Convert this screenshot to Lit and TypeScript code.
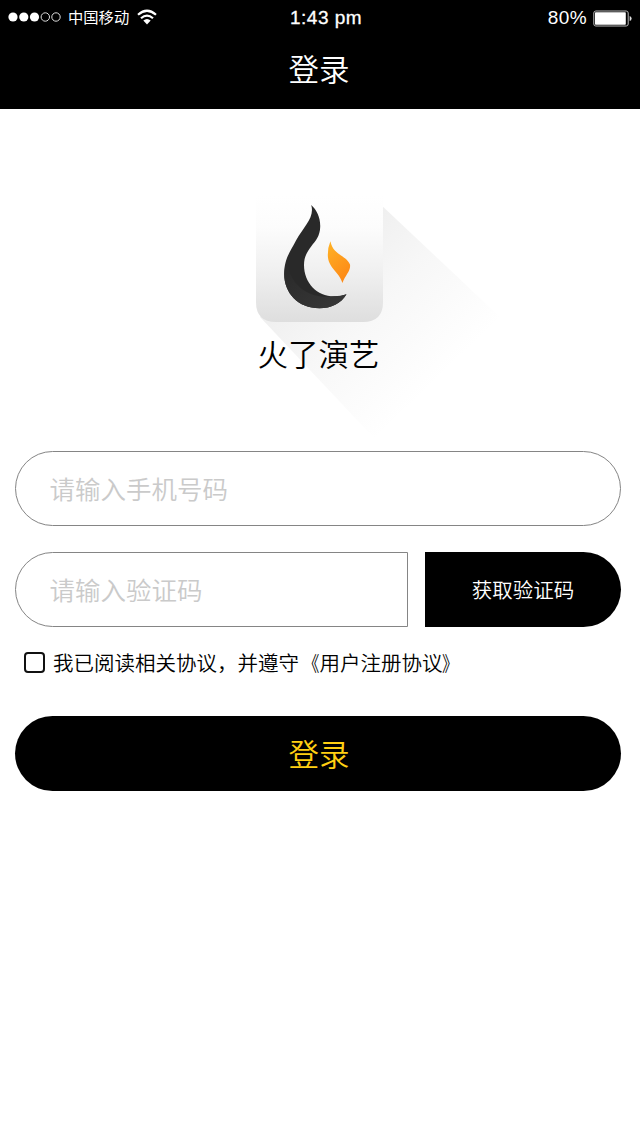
import { LitElement, html, css } from "lit";
import { customElement } from "lit/decorators.js";

@customElement("status-bar")
class StatusBar extends LitElement {
  static styles = css`
    :host { display: grid; grid-template-columns: 282px auto 1fr; align-items: center; height: 36px; padding: 0 8px 0 8px; color: #fff; font-family: "Liberation Sans", "Noto Sans CJK SC", sans-serif; }
    .left, .right { display: flex; align-items: center; }
    .left { padding-bottom: 2px; }
    .right { justify-content: flex-end; }
    .carrier { font: 400 15.3px/24px "Noto Sans CJK SC", sans-serif; margin: -3px 8px 0 7px; }
    .time { font-size: 19px; line-height: 24px; letter-spacing: 0.5px; -webkit-text-stroke: 0.3px #fff; }
    .percent { font-size: 19px; line-height: 24px; margin-right: 6px; letter-spacing: 0.4px; }
    svg { display: block; }
  `;
  render() {
    return html`
      <div class="left">
        <svg width="53" height="12" viewBox="0 0 53 12" fill="#fff">
          <circle cx="5" cy="6" r="4.6" /><circle cx="15.8" cy="6" r="4.6" /><circle cx="26.5" cy="6" r="4.6" />
          <g fill="none" stroke="#ddd" stroke-width="1"><circle cx="37.3" cy="6" r="4.2" /><circle cx="48" cy="6" r="4.2" /></g>
        </svg>
        <span class="carrier">中国移动</span>
        <svg width="20" height="16" viewBox="0 0 20 16">
          <g fill="none" stroke="#fff" stroke-width="2.2"><path d="M1 5.8Q10-2.3 19 5.8" /><path d="M4 9.2Q10 3.9 16 9.2" /></g>
          <path d="M6.3 11.5Q10 8.5 13.7 11.5L10 15.4Z" fill="#fff" />
        </svg>
      </div>
      <span class="time">1:43 pm</span>
      <div class="right">
        <span class="percent">80%</span>
        <svg width="39" height="17" viewBox="0 0 39 17">
          <rect x=".8" y="1" width="34.4" height="15" rx="2" fill="none" stroke="#bbb" />
          <rect x="2" y="2.2" width="30.8" height="12.6" rx=".7" fill="#fff" />
          <path d="M36.7 6Q38.6 6.5 38.6 8.5T36.7 11Z" fill="#ddd" />
        </svg>
      </div>`;
  }
}

@customElement("brand-logo")
class BrandLogo extends LitElement {
  static styles = css`
    :host { display: grid; grid-template-columns: 270px; height: 260px; width: 270px; }
    .art, .name { grid-area: 1 / 1; }
    .art { display: block; }
    .name { padding: 150px 0 0 17.5px; font-size: 30.5px; line-height: 46px; color: #000; }
  `;
  render() {
    return html`
      <svg class="art" width="270" height="260" viewBox="240 180 270 260">
        <defs>
          <linearGradient id="tile" x1="0" y1="0" x2="0" y2="1"><stop offset="0" stop-color="#fff" /><stop offset=".25" stop-color="#fcfcfc" /><stop offset=".6" stop-color="#f0f0f0" /><stop offset="1" stop-color="#dedede" /></linearGradient>
          <linearGradient id="cast" gradientUnits="userSpaceOnUse" x1="320" y1="262" x2="436" y2="382"><stop offset="0" stop-color="#efefef" /><stop offset=".4" stop-color="#f7f7f7" /><stop offset="1" stop-color="#fff" /></linearGradient>
          <linearGradient id="spark" x1="0" y1="0" x2=".5" y2="1"><stop offset="0" stop-color="#ffb325" /><stop offset="1" stop-color="#fd8b17" /></linearGradient>
          <linearGradient id="ember" x1="0" y1="0" x2="1" y2="1"><stop offset="0" stop-color="#292929" /><stop offset="1" stop-color="#383838" /></linearGradient>
        </defs>
        <path d="M379 203L500 317L374 438L260 317Z" fill="url(#cast)" />
        <path d="M256 196H383V302Q383 322 363 322H276Q256 322 256 302Z" fill="url(#tile)" />
        <path d="M311.2 205C317 210 320.6 218 320.2 227C320 236 315.5 241 311.5 246C307 252 304 257 304 265C304 283 317 296.3 334 296.3C339 296.5 343 295.5 346.5 294.2C341 303.5 331 308.3 319.5 308.3C298 308.3 284.2 293 284.2 274C284.2 259 290 252 296 240.5C304 226 315 217 311.2 205Z" fill="#292929" />
        <path d="M287.5 262C289 283 307 300 334 296.3Q341 296.3 346.5 294.2C341 303.5 331 308.3 319.5 308.3C298 308.3 284.2 293 284.2 274Q284.5 267 287.5 262Z" fill="url(#ember)" />
        <path d="M330.4 241.2C333 255 346 255 350 264.5C351 271 345.2 275 342.4 283C339.5 272 327.8 268 327.8 255Q327.8 247 330.4 241.2Z" fill="url(#spark)" />
      </svg>
      <span class="name">火了演艺</span>`;
  }
}

@customElement("app-root")
class AppRoot extends LitElement {
  static styles = css`
    :host { display: flex; flex-direction: column; height: 1138px; background: #fff; overflow: hidden; font-family: "Noto Sans CJK SC", sans-serif; font-weight: 350; }
    * { box-sizing: border-box; }
    .header { background: #000; height: 109px; }
    .title { margin: 0; color: #fff; font-size: 30.5px; font-weight: 350; line-height: 46px; padding-top: 9px; text-align: center; padding-right: 2px; }
    .brand { margin: 71px 0 0 240px; }
    .form { display: flex; flex-direction: column; padding: 11px 19px 0 15px; }
    input.field { font-family: inherit; font-size: 25.5px; font-weight: 350; height: 75px; border: 1px solid #858585; border-radius: 38px; padding: 0 34px 2px 33.5px; width: 100%; background: #fff; outline: none; }
    .field::placeholder { color: #cacaca; opacity: 1; }
    .row { display: grid; grid-template-columns: 393px 196px; gap: 17px; margin-top: 26px; }
    input.code { border-radius: 38px 0 0 38px; }
    button { font-family: inherit; font-weight: 350; border: 0; background: #000; height: 75px; padding: 0 0 2px; }
    .send { color: #fff; font-size: 20.5px; border-radius: 0 38px 38px 0; }
    .agree { display: flex; align-items: center; height: 30px; margin: 20px 0 0 9px; font-size: 20.5px; line-height: 30px; color: #000; white-space: nowrap; }
    .terms { padding-bottom: 1px; }
    .open, .close { display: inline-block; transform: scaleX(0.8); transform-origin: 100% 50%; }
    .close { transform: translateX(-1px) scaleX(0.8); transform-origin: 0 50%; }
    .check { appearance: none; width: 21px; height: 21px; border: 2px solid #111; border-radius: 4px; margin: 0 8px 0 0; }
    .submit { margin-top: 39px; border-radius: 38px; color: #ffcf12; font-size: 30.5px; padding-left: 2px; }
  `;
  render() {
    return html`
      <header class="header"><status-bar></status-bar><h1 class="title">登录</h1></header>
      <brand-logo class="brand"></brand-logo>
      <div class="form">
        <input class="field" placeholder="请输入手机号码" />
        <div class="row">
          <input class="field code" placeholder="请输入验证码" />
          <button class="send">获取验证码</button>
        </div>
        <label class="agree"><input class="check" type="checkbox" /><span class="terms">我已阅读相关协议，并遵守<span class="open">《</span>用户注册协议<span class="close">》</span></span></label>
        <button class="submit">登录</button>
      </div>`;
  }
}
